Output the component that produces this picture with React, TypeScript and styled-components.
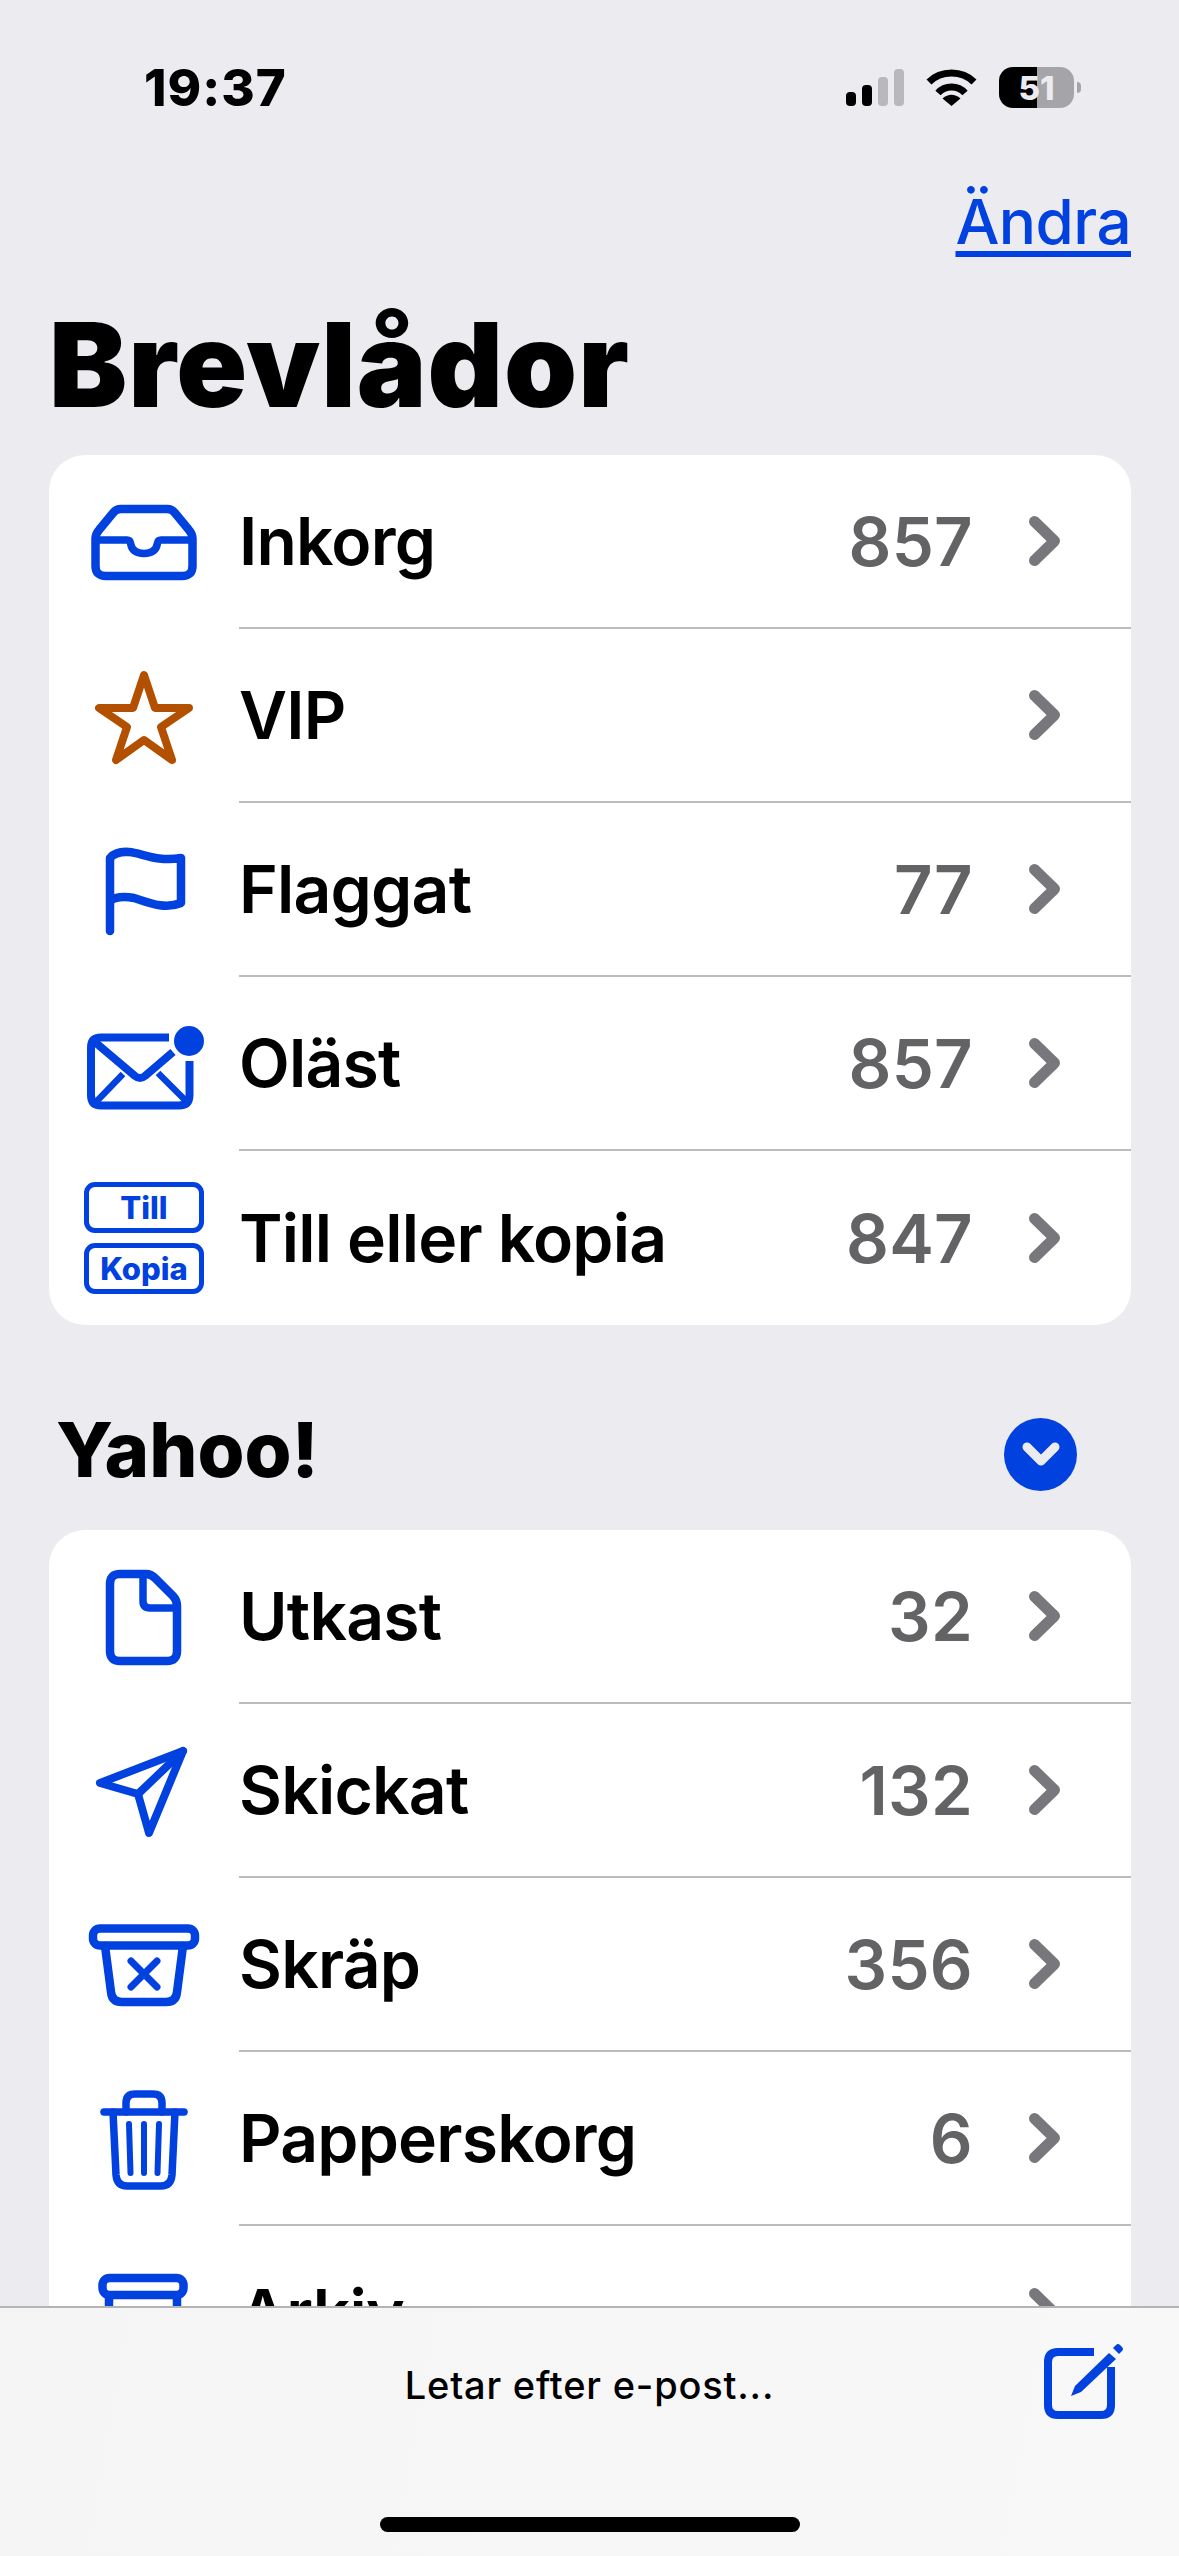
import React from 'react';
import styled, { createGlobalStyle } from 'styled-components';

const BLUE = '#0041df';

const GlobalStyle = createGlobalStyle`
  html, body {
    margin: 0;
    padding: 0;
    background: #ecebf0;
  }
  * {
    box-sizing: border-box;
  }
`;

const Page = styled.div`
  display: flex;
  flex-direction: column;
  width: 1179px;
  height: 2556px;
  overflow: hidden;
  background: #ecebf0;
  font-family: Inter, 'Liberation Sans', sans-serif;
  color: #000;
`;

const Content = styled.main`
  flex: 1;
  min-height: 0;
  overflow: hidden;
`;

const StatusBar = styled.div`
  display: flex;
  align-items: center;
  justify-content: space-between;
  height: 41px;
  margin-top: 67px;
  padding: 0 98px 0 144px;
`;

const Time = styled.span`
  font-size: 51px;
  font-weight: 800;
  line-height: 41px;
  letter-spacing: 1px;
`;

const StatusIcons = styled.div`
  display: flex;
  align-items: center;
  gap: 22px;
`;

const Signal = styled.div`
  display: flex;
  align-items: flex-end;
  gap: 6px;
  height: 37px;
`;

const SignalBar = styled.span<{ $height: number; $on: boolean }>`
  width: 10px;
  height: ${(p) => p.$height}px;
  border-radius: 4px;
  background: ${(p) => (p.$on ? '#000' : '#b9b9bd')};
`;

const Battery = styled.div`
  position: relative;
  display: flex;
  align-items: center;
  justify-content: center;
  width: 75px;
  height: 41px;
  border-radius: 14px;
  background: linear-gradient(90deg, #000 51%, #a5a5a9 51%);
  color: #ecebf0;
  font-size: 33px;
  font-weight: 800;
  margin-right: 7px;

  &::after {
    content: '';
    position: absolute;
    left: 78px;
    top: 15px;
    width: 4px;
    height: 11px;
    border-radius: 0 6px 6px 0;
    background: #a5a5a9;
  }
`;

const NavBar = styled.div`
  display: flex;
  justify-content: flex-end;
  height: 118px;
  margin-top: 76px;
  padding-right: 48px;
`;

const EditLink = styled.a`
  color: ${BLUE};
  font-size: 62px;
  font-weight: 500;
  line-height: 76px;
  letter-spacing: -0.6px;
  text-decoration: underline;
  text-decoration-thickness: 6px;
  text-underline-offset: 7px;
`;

const Title = styled.h1`
  margin: 0 0 27px;
  padding-left: 49px;
  height: 126px;
  font-size: 117px;
  font-weight: 900;
  line-height: 126px;
  letter-spacing: 1px;
`;

const Card = styled.section`
  margin: 0 48px 0 49px;
  border-radius: 36px;
  background: #fff;
  overflow: hidden;
`;

const Row = styled.div`
  display: flex;
  height: 174px;
`;

const IconCell = styled.div`
  display: flex;
  align-items: center;
  justify-content: center;
  flex: 0 0 190px;
  color: ${BLUE};
`;

const RowBody = styled.div<{ $last: boolean }>`
  flex: 1;
  display: flex;
  align-items: center;
  padding: 0 71px 0 0;
  border-bottom: ${(p) => (p.$last ? 'none' : '2px solid #bcbcbe')};
`;

const Label = styled.span`
  flex: 1;
  font-size: 66px;
  font-weight: 600;
  letter-spacing: -0.8px;
`;

const Count = styled.span`
  margin-right: 56px;
  color: #636366;
  font-size: 67px;
  font-weight: 600;
  letter-spacing: 0.3px;
`;

const SectionHeader = styled.div`
  display: flex;
  align-items: center;
  justify-content: space-between;
  height: 205px;
  padding: 53px 102px 0 56px;
`;

const SectionTitle = styled.h2`
  margin: 0 0 10px;
  font-size: 76px;
  font-weight: 800;
`;

const ToggleButton = styled.button`
  display: flex;
  align-items: center;
  justify-content: center;
  width: 73px;
  height: 73px;
  padding: 0;
  border: none;
  border-radius: 50%;
  background: ${BLUE};
`;

const TagStack = styled.div`
  display: flex;
  flex-direction: column;
  gap: 10px;
  width: 120px;
`;

const Tag = styled.span`
  display: flex;
  align-items: center;
  justify-content: center;
  height: 51px;
  border: 5px solid ${BLUE};
  border-radius: 11px;
  font-size: 31px;
  font-weight: 800;
  color: ${BLUE};
`;

const Toolbar = styled.footer`
  flex: 0 0 250px;
  display: flex;
  flex-direction: column;
  align-items: center;
  border-top: 2px solid #b4b4b6;
  background: linear-gradient(100deg, #f5f5f6, #f8f8f8);
`;

const ToolbarRow = styled.div`
  display: grid;
  grid-template-columns: 1fr auto 1fr;
  align-items: center;
  width: 100%;
  height: 148px;
`;

const ToolbarStatus = styled.span`
  grid-column: 2;
  margin-top: 6px;
  font-size: 38px;
  font-weight: 500;
  letter-spacing: 0.8px;
`;

const ComposeButton = styled.div`
  grid-column: 3;
  display: flex;
  justify-content: flex-end;
  padding-right: 55px;
  color: ${BLUE};
`;

const HomeIndicator = styled.div`
  width: 420px;
  height: 15px;
  margin-top: 61px;
  border-radius: 8px;
  background: #000;
`;

const IconSvg = styled.svg`
  display: block;
  fill: none;
  stroke: currentColor;
  stroke-linecap: round;
  stroke-linejoin: round;
  overflow: visible;
`;

const Icon = ({ sw = 8.5, children }: { sw?: number; children: React.ReactNode }) => (
  <IconSvg width="130" height="130" viewBox="-65 -65 130 130" strokeWidth={sw}>
    {children}
  </IconSvg>
);

const InboxIcon = () => (
  <Icon>
    <path d="M-23 -33 H23 Q28 -33 31 -29 L45 -12 Q48.5 -8 48.5 -3 V24 Q48.5 34 38 34 H-38 Q-48.5 34 -48.5 24 V-3 Q-48.5 -8 -45 -12 L-31 -29 Q-28 -33 -23 -33 Z" />
    <path d="M-46 -2 H-17 Q-14 -2 -13.5 1 Q-12 11.5 0 11.5 Q12 11.5 13.5 1 Q14 -2 17 -2 H46" strokeWidth={7.5} />
  </Icon>
);

const StarIcon = () => (
  <Icon sw={8}>
    <path
      stroke="#b25000"
      d="M0 -41 L11 -8 H45 L17 11 L28 44 L0 24 L-28 44 L-17 11 L-45 -8 H-11 Z"
    />
  </Icon>
);

const FlagIcon = () => (
  <Icon>
    <path d="M-34 41 V-32 Q-28 -39 -15 -38 C-2 -37 12 -28 37 -32 V13 C20 20 3 12 -10 8 C-20 6 -30 7 -34 11" />
  </Icon>
);

const UnreadIcon = () => (
  <Icon sw={8}>
    <path d="M25 -26.5 H-43 Q-53 -26.5 -53 -16.5 V31 Q-53 41.5 -43 41.5 H35 Q45.5 41.5 45.5 31 V-3" strokeLinecap="butt" />
    <path d="M-48 -21 L-9 12 Q-4 16 1 12 L29 -12" strokeLinecap="butt" />
    <path d="M-48 38 L-21 10 M42 37 L14 9" strokeLinecap="butt" strokeWidth={6.5} />
    <circle cx="45" cy="-23" r="15" fill="currentColor" stroke="none" />
  </Icon>
);

const DraftIcon = () => (
  <Icon>
    <path d="M-24 -43 H2 Q7 -43 11 -39 L29 -21 Q33 -17 33 -11 V34 Q33 44 23 44 H-24 Q-34 44 -34 34 V-33 Q-34 -43 -24 -43 Z" />
    <path d="M-1 -43 V-16 Q-1 -9 6 -9 H33" strokeWidth={7.5} />
  </Icon>
);

const SentIcon = () => (
  <Icon sw={8}>
    <path d="M39 -40 L-44 -8 L-6 3 L5 42 Z" />
    <path d="M-6 3 L39 -40" />
  </Icon>
);

const JunkIcon = () => (
  <Icon>
    <rect x="-51" y="-36.5" width="102" height="17" rx="7" />
    <path d="M-39 -19 L-33 27 Q-32 37 -22 37 H22 Q32 37 33 27 L39 -19" />
    <path d="M-13 -4 L13 22 M13 -4 L-13 22" strokeWidth={7} />
  </Icon>
);

const TrashIcon = () => (
  <Icon sw={7.5}>
    <path d="M-40 -27 H40" />
    <path d="M-18 -27 V-36 Q-18 -45 -9 -45 H9 Q18 -45 18 -36 V-27" />
    <path d="M-31 -27 L-28 36 Q-27 47 -17 47 H17 Q27 47 28 36 L31 -27" />
    <path d="M-15 -15 L-13.5 34 M0 -15 V34 M15 -15 L13.5 34" strokeWidth={6} />
  </Icon>
);

const ArchiveIcon = () => (
  <Icon>
    <rect x="-41.5" y="-35" width="81" height="17" rx="7" />
    <path d="M-35 -16 V32 M33 -16 V32" strokeLinecap="butt" />
  </Icon>
);

const Chevron = () => (
  <svg width="31" height="50" viewBox="0 0 31 50" fill="none" stroke="#78787c" strokeWidth="11" strokeLinecap="round" strokeLinejoin="round">
    <path d="M5.5 5.5 L25.5 25 L5.5 44.5" />
  </svg>
);

const Wifi = () => (
  <svg width="51" height="37" viewBox="0 0 51 37" fill="none" stroke="#000" strokeWidth="7">
    <path d="M3 13 C15 1 36 1 48 13" />
    <path d="M12 24 C19 16 32 16 39 24" />
    <path d="M16.5 29.5 Q25.5 22 34.5 29.5 L25.5 37 Z" fill="#000" stroke="none" />
  </svg>
);

const Compose = () => (
  <svg width="82" height="82" viewBox="0 0 82 82" fill="none" stroke="currentColor" strokeWidth="8">
    <path d="M52 11 H16 Q6 11 6 21 V64 Q6 74 16 74 H59 Q69 74 69 64 V26" />
    <path d="M29 55 L33 45 L67 12 L74 18 L39 51 Z" fill="currentColor" stroke="none" />
    <path d="M71 7 L74 4 Q76 2 78 4 L80 6 Q82 8 80 10 L77 13 Z" fill="currentColor" stroke="none" />
  </svg>
);

const ToggleChevron = () => (
  <svg width="38" height="24" viewBox="0 0 38 24" fill="none" stroke="#ecebf0" strokeWidth="9" strokeLinecap="round" strokeLinejoin="round">
    <path d="M5 5 L19 19 L33 5" />
  </svg>
);

const TagsIcon = () => (
  <TagStack>
    <Tag>Till</Tag>
    <Tag>Kopia</Tag>
  </TagStack>
);

type Mailbox = {
  label: string;
  count?: number;
  icon: React.ReactNode;
};

const mainBoxes: Mailbox[] = [
  { label: 'Inkorg', count: 857, icon: <InboxIcon /> },
  { label: 'VIP', icon: <StarIcon /> },
  { label: 'Flaggat', count: 77, icon: <FlagIcon /> },
  { label: 'Oläst', count: 857, icon: <UnreadIcon /> },
  { label: 'Till eller kopia', count: 847, icon: <TagsIcon /> },
];

const yahooBoxes: Mailbox[] = [
  { label: 'Utkast', count: 32, icon: <DraftIcon /> },
  { label: 'Skickat', count: 132, icon: <SentIcon /> },
  { label: 'Skräp', count: 356, icon: <JunkIcon /> },
  { label: 'Papperskorg', count: 6, icon: <TrashIcon /> },
  { label: 'Arkiv', icon: <ArchiveIcon /> },
];

const MailboxList = ({ boxes }: { boxes: Mailbox[] }) => (
  <Card>
    {boxes.map((box, i) => (
      <Row key={box.label}>
        <IconCell>{box.icon}</IconCell>
        <RowBody $last={i === boxes.length - 1}>
          <Label>{box.label}</Label>
          {box.count !== undefined && <Count>{box.count}</Count>}
          <Chevron />
        </RowBody>
      </Row>
    ))}
  </Card>
);

const App = () => (
  <Page>
    <GlobalStyle />
    <Content>
      <StatusBar>
        <Time>19:37</Time>
        <StatusIcons>
          <Signal>
            <SignalBar $height={14} $on />
            <SignalBar $height={21} $on />
            <SignalBar $height={29} $on={false} />
            <SignalBar $height={37} $on={false} />
          </Signal>
          <Wifi />
          <Battery>51</Battery>
        </StatusIcons>
      </StatusBar>
      <NavBar>
        <EditLink>Ändra</EditLink>
      </NavBar>
      <Title>Brevlådor</Title>
      <MailboxList boxes={mainBoxes} />
      <SectionHeader>
        <SectionTitle>Yahoo!</SectionTitle>
        <ToggleButton>
          <ToggleChevron />
        </ToggleButton>
      </SectionHeader>
      <MailboxList boxes={yahooBoxes} />
    </Content>
    <Toolbar>
      <ToolbarRow>
        <ToolbarStatus>Letar efter e-post...</ToolbarStatus>
        <ComposeButton>
          <Compose />
        </ComposeButton>
      </ToolbarRow>
      <HomeIndicator />
    </Toolbar>
  </Page>
);

export default App;
